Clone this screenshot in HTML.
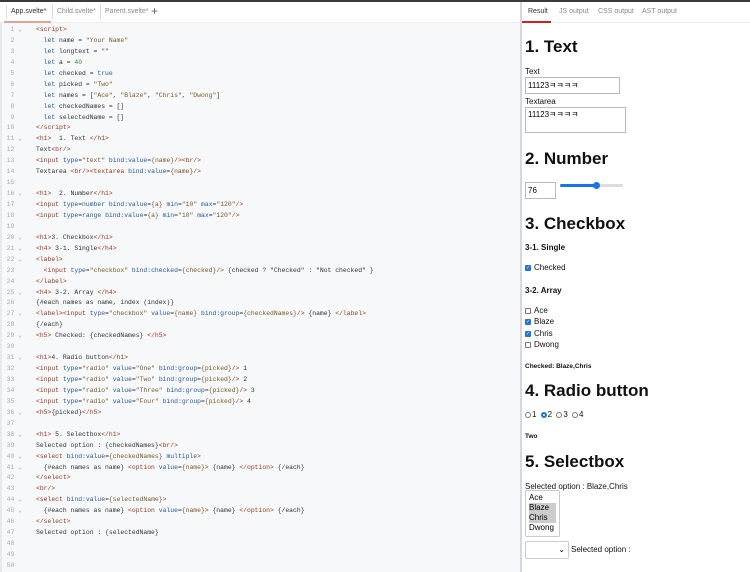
<!DOCTYPE html>
<html><head><meta charset="utf-8"><style>
*{margin:0;padding:0;box-sizing:border-box}
body{width:750px;height:572px;overflow:hidden;background:#fff;position:relative;font-family:"Liberation Sans",sans-serif}
#top{position:absolute;left:0;top:0;width:750px;height:2px;background:#3a3a3a}
#tabs{position:absolute;left:0;top:2px;width:520px;height:21px;background:#fff;border-bottom:1px solid #eee;font-size:7px;color:#888}
.t{position:absolute;top:6px}
#ed{position:absolute;left:0;top:23px;width:520px;height:549px;background:#f6f8fa;border-left:2px solid #e6e9ee}
#code{position:absolute;left:0;top:25px;font-family:"Liberation Mono",monospace;font-size:6.4px;line-height:10.94px;color:#333;white-space:pre}
.ln{display:inline-block;width:22px;text-align:right;color:#aaa;margin-right:14px}
.g{color:#aaa}
.k{color:#2a5a9a}.tg{color:#9a3a1a}.s{color:#7a5a2a}.n{color:#3a8a3a}.a{color:#2a5a9a}
#div{position:absolute;left:520px;top:2px;width:2px;height:570px;background:#d8d8d8}
#rt{position:absolute;left:522px;top:2px;width:228px;height:21px;border-bottom:1px solid #eee;font-size:7px;color:#888}
.ab{position:absolute;white-space:nowrap;color:#111}
h1{position:absolute;font-size:17px;font-weight:bold;left:525px;color:#111;white-space:nowrap}
.b8{font-size:8px}
.inp{position:absolute;border:1px solid #bbb;background:#fff;font-size:8px;padding-left:2px}
.cb{display:inline-block;width:6px;height:6px;border:1px solid #777;border-radius:1px;vertical-align:-1px;margin-right:3px;background:#fff;font-size:5px;line-height:5px;color:#fff;text-align:center;overflow:hidden}
.cb.on{background:#1a73e8;border-color:#1a73e8}
.rd{display:inline-block;width:6px;height:6px;border:1px solid #777;border-radius:50%;vertical-align:-1px;margin:0 1px 0 2px;background:#fff}
.rd.on{border:2px solid #1a73e8;background:#fff}
</style></head><body>
<div id="top"></div>
<div id="ed"></div>
<div id="tabs">
<div style="position:absolute;left:6px;top:3px;width:1px;height:14px;background:#ddd"></div>
<span class="t" style="left:11px;color:#333">App.svelte*</span>
<div style="position:absolute;left:4px;top:19px;width:47px;height:2px;background:#e8a090"></div>
<div style="position:absolute;left:52px;top:3px;width:1px;height:14px;background:#ddd"></div>
<span class="t" style="left:57px">Child.svelte*</span>
<div style="position:absolute;left:100px;top:3px;width:1px;height:14px;background:#ddd"></div>
<span class="t" style="left:105px">Parent.svelte*</span>
<span class="t" style="left:151px;top:2px;font-size:12px;color:#666">+</span>
</div>
<div id="code"><span class="ln">1 <span class="g">⌄</span></span><span class="tg">&lt;script&gt;</span>
<span class="ln">2  </span>  <span class="k">let</span> name = <span class="s">"Your Name"</span>
<span class="ln">3  </span>  <span class="k">let</span> longtext = <span class="s">""</span>
<span class="ln">4  </span>  <span class="k">let</span> a = <span class="n">40</span>
<span class="ln">5  </span>  <span class="k">let</span> checked = <span class="k">true</span>
<span class="ln">6  </span>  <span class="k">let</span> picked = <span class="s">"Two"</span>
<span class="ln">7  </span>  <span class="k">let</span> names = [<span class="s">"Ace"</span>, <span class="s">"Blaze"</span>, <span class="s">"Chris"</span>, <span class="s">"Dwong"</span>]
<span class="ln">8  </span>  <span class="k">let</span> checkedNames = []
<span class="ln">9  </span>  <span class="k">let</span> selectedName = []
<span class="ln">10  </span><span class="tg">&lt;/script&gt;</span>
<span class="ln">11 <span class="g">⌄</span></span><span class="tg">&lt;h1&gt;</span>  1. Text <span class="tg">&lt;/h1&gt;</span>
<span class="ln">12  </span>Text<span class="tg">&lt;br/&gt;</span>
<span class="ln">13  </span><span class="tg">&lt;input</span> <span class="a">type</span>=<span class="s">"text"</span> <span class="a">bind:value</span>=<span class="s">{name}</span><span class="tg">/&gt;&lt;br/&gt;</span>
<span class="ln">14  </span>Textarea <span class="tg">&lt;br/&gt;&lt;textarea</span> <span class="a">bind:value</span>=<span class="s">{name}</span><span class="tg">/&gt;</span>
<span class="ln">15  </span>
<span class="ln">16 <span class="g">⌄</span></span><span class="tg">&lt;h1&gt;</span>  2. Number<span class="tg">&lt;/h1&gt;</span>
<span class="ln">17  </span><span class="tg">&lt;input</span> <span class="a">type</span>=<span class="a">number</span> <span class="a">bind:value</span>=<span class="s">{a}</span> <span class="a">min</span>=<span class="s">"10"</span> <span class="a">max</span>=<span class="s">"120"</span><span class="tg">/&gt;</span>
<span class="ln">18  </span><span class="tg">&lt;input</span> <span class="a">type</span>=<span class="a">range</span> <span class="a">bind:value</span>=<span class="s">{a}</span> <span class="a">min</span>=<span class="s">"10"</span> <span class="a">max</span>=<span class="s">"120"</span><span class="tg">/&gt;</span>
<span class="ln">19  </span>
<span class="ln">20 <span class="g">⌄</span></span><span class="tg">&lt;h1&gt;</span>3. Checkbox<span class="tg">&lt;/h1&gt;</span>
<span class="ln">21 <span class="g">⌄</span></span><span class="tg">&lt;h4&gt;</span> 3-1. Single<span class="tg">&lt;/h4&gt;</span>
<span class="ln">22 <span class="g">⌄</span></span><span class="tg">&lt;label&gt;</span>
<span class="ln">23  </span>  <span class="tg">&lt;input</span> <span class="a">type</span>=<span class="s">"checkbox"</span> <span class="a">bind:checked</span>=<span class="s">{checked}</span><span class="tg">/&gt;</span> {checked ? "Checked" : "Not checked" }
<span class="ln">24  </span><span class="tg">&lt;/label&gt;</span>
<span class="ln">25 <span class="g">⌄</span></span><span class="tg">&lt;h4&gt;</span> 3-2. Array <span class="tg">&lt;/h4&gt;</span>
<span class="ln">26  </span>{#each names as name, index (index)}
<span class="ln">27 <span class="g">⌄</span></span><span class="tg">&lt;label&gt;&lt;input</span> <span class="a">type</span>=<span class="s">"checkbox"</span> <span class="a">value</span>=<span class="s">{name}</span> <span class="a">bind:group</span>=<span class="s">{checkedNames}</span><span class="tg">/&gt;</span> {name} <span class="tg">&lt;/label&gt;</span>
<span class="ln">28  </span>{/each}
<span class="ln">29 <span class="g">⌄</span></span><span class="tg">&lt;h5&gt;</span> Checked: {checkedNames} <span class="tg">&lt;/h5&gt;</span>
<span class="ln">30  </span>
<span class="ln">31 <span class="g">⌄</span></span><span class="tg">&lt;h1&gt;</span>4. Radio button<span class="tg">&lt;/h1&gt;</span>
<span class="ln">32  </span><span class="tg">&lt;input</span> <span class="a">type</span>=<span class="s">"radio"</span> <span class="a">value</span>=<span class="s">"One"</span> <span class="a">bind:group</span>=<span class="s">{picked}</span><span class="tg">/&gt;</span> 1
<span class="ln">33  </span><span class="tg">&lt;input</span> <span class="a">type</span>=<span class="s">"radio"</span> <span class="a">value</span>=<span class="s">"Two"</span> <span class="a">bind:group</span>=<span class="s">{picked}</span><span class="tg">/&gt;</span> 2
<span class="ln">34  </span><span class="tg">&lt;input</span> <span class="a">type</span>=<span class="s">"radio"</span> <span class="a">value</span>=<span class="s">"Three"</span> <span class="a">bind:group</span>=<span class="s">{picked}</span><span class="tg">/&gt;</span> 3
<span class="ln">35  </span><span class="tg">&lt;input</span> <span class="a">type</span>=<span class="s">"radio"</span> <span class="a">value</span>=<span class="s">"Four"</span> <span class="a">bind:group</span>=<span class="s">{picked}</span><span class="tg">/&gt;</span> 4
<span class="ln">36 <span class="g">⌄</span></span><span class="tg">&lt;h5&gt;</span>{picked}<span class="tg">&lt;/h5&gt;</span>
<span class="ln">37  </span>
<span class="ln">38 <span class="g">⌄</span></span><span class="tg">&lt;h1&gt;</span> 5. Selectbox<span class="tg">&lt;/h1&gt;</span>
<span class="ln">39  </span>Selected option : {checkedNames}<span class="tg">&lt;br/&gt;</span>
<span class="ln">40 <span class="g">⌄</span></span><span class="tg">&lt;select</span> <span class="a">bind:value</span>=<span class="s">{checkedNames}</span> <span class="a">multiple</span><span class="tg">&gt;</span>
<span class="ln">41 <span class="g">⌄</span></span>  {#each names as name} <span class="tg">&lt;option</span> <span class="a">value</span>=<span class="s">{name}</span><span class="tg">&gt;</span> {name} <span class="tg">&lt;/option&gt;</span> {/each}
<span class="ln">42  </span><span class="tg">&lt;/select&gt;</span>
<span class="ln">43  </span><span class="tg">&lt;br/&gt;</span>
<span class="ln">44 <span class="g">⌄</span></span><span class="tg">&lt;select</span> <span class="a">bind:value</span>=<span class="s">{selectedName}</span><span class="tg">&gt;</span>
<span class="ln">45 <span class="g">⌄</span></span>  {#each names as name} <span class="tg">&lt;option</span> <span class="a">value</span>=<span class="s">{name}</span><span class="tg">&gt;</span> {name} <span class="tg">&lt;/option&gt;</span> {/each}
<span class="ln">46  </span><span class="tg">&lt;/select&gt;</span>
<span class="ln">47  </span>Selected option : {selectedName}
<span class="ln">48  </span>
<span class="ln">49  </span>
<span class="ln">50  </span></div>
<div id="div"></div>
<div id="rt">
<span class="t" style="left:6px;color:#333">Result</span>
<div style="position:absolute;left:0;top:19px;width:29px;height:2px;background:#d02020"></div>
<span class="t" style="left:37px">JS output</span>
<span class="t" style="left:76px">CSS output</span>
<span class="t" style="left:120px">AST output</span>
</div>

<h1 style="top:37px">1. Text</h1>
<div class="ab b8" style="left:525px;top:67px">Text</div>
<div class="inp" style="left:525px;top:77px;width:95px;height:17px;line-height:15px">11123ㅋㅋㅋㅋ</div>
<div class="ab b8" style="left:525px;top:97px">Textarea</div>
<div class="inp" style="left:525px;top:107px;width:101px;height:26px;line-height:13px">11123ㅋㅋㅋㅋ</div>
<h1 style="top:149px">2. Number</h1>
<div class="inp" style="left:525px;top:182px;width:31px;height:17px;line-height:15px">76</div>
<div style="position:absolute;left:560px;top:184px;width:63px;height:3px;background:#ddd;border-radius:2px"></div>
<div style="position:absolute;left:560px;top:184px;width:37px;height:3px;background:#1a73e8;border-radius:2px"></div>
<div style="position:absolute;left:593px;top:182px;width:7px;height:7px;background:#1a73e8;border-radius:50%"></div>
<h1 style="top:214px">3. Checkbox</h1>
<div class="ab" style="left:525px;top:243px;font-size:8px;font-weight:bold">3-1. Single</div>
<div class="ab b8" style="left:525px;top:263px"><span class="cb on">✓</span>Checked</div>
<div class="ab" style="left:525px;top:286px;font-size:8px;font-weight:bold">3-2. Array</div>
<div class="ab b8" style="left:525px;top:306px"><span class="cb"></span>Ace</div>
<div class="ab b8" style="left:525px;top:317px"><span class="cb on">✓</span>Blaze</div>
<div class="ab b8" style="left:525px;top:329px"><span class="cb on">✓</span>Chris</div>
<div class="ab b8" style="left:525px;top:340px"><span class="cb"></span>Dwong</div>
<div class="ab" style="left:525px;top:363px;font-size:6.5px;font-weight:bold">Checked: Blaze,Chris</div>
<h1 style="top:381px">4. Radio button</h1>
<div class="ab b8" style="left:523px;top:410px"><span class="rd"></span>1 <span class="rd on"></span>2 <span class="rd"></span>3 <span class="rd"></span>4</div>
<div class="ab" style="left:525px;top:433px;font-size:6.5px;font-weight:bold">Two</div>
<h1 style="top:452px">5. Selectbox</h1>
<div class="ab b8" style="left:525px;top:482px">Selected option : Blaze,Chris</div>
<div style="position:absolute;left:525px;top:490px;width:35px;height:47px;border:1px solid #ccc;border-radius:2px;background:#fff;font-size:8px;padding:2px 0 0 3px;line-height:10px">
<div>Ace</div><div style="background:#ccc;width:27px">Blaze</div><div style="background:#ccc;width:27px">Chris</div><div>Dwong</div></div>
<div style="position:absolute;left:525px;top:541px;width:44px;height:18px;border:1px solid #ccc;border-radius:2px;background:#fff;font-size:8px;text-align:right;padding-right:3px;line-height:16px">⌄</div>
<div class="ab b8" style="left:571px;top:545px">Selected option :</div>
</body></html>
